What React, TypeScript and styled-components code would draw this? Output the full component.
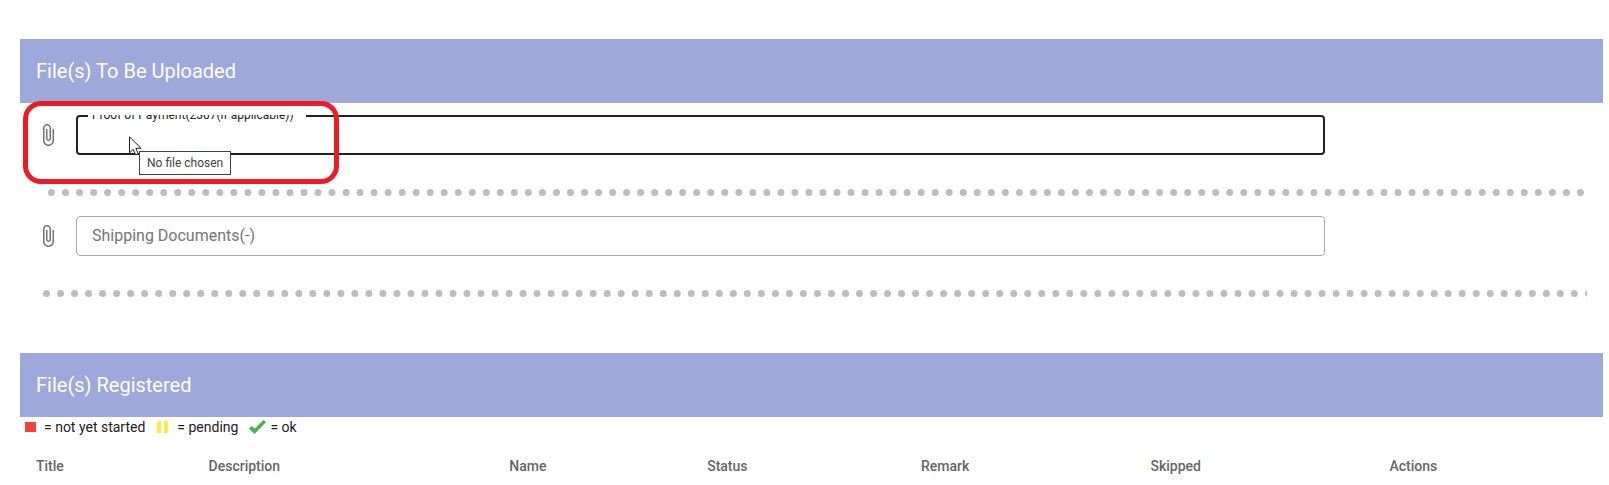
import React from "react";
import styled, { createGlobalStyle } from "styled-components";

const GlobalStyle = createGlobalStyle`
  *, *::before, *::after { box-sizing: border-box; }
  body {
    margin: 0;
    background: #fff;
    color: #212121;
    font-family: Roboto, "Liberation Sans", sans-serif;
    font-size: 14px;
  }
`;

const Page = styled.main`
  padding: 39px 6px 0 20px;
`;

const SectionBar = styled.h2`
  display: flex;
  align-items: center;
  height: 64px;
  margin: 0;
  padding: 0 16px;
  background: #9fa8da;
  color: #fff;
  font-size: 20px;
  font-weight: 400;
  line-height: 32px;
`;

const UploadList = styled.section`
  padding-bottom: 56px;
`;

const UploadRow = styled.div<{ $first?: boolean }>`
  position: relative;
  padding: ${(p) => (p.$first ? 12 : 20)}px 16px 34px;
`;

const UploadField = styled.div`
  display: flex;
  align-items: center;
  gap: 16px;
  width: 83.1%;
`;

const ClipIcon = styled.svg`
  flex: none;
  width: 24px;
  height: 24px;
  fill: #757575;
`;

const FieldBox = styled.div`
  position: relative;
  flex: 1;
  min-width: 0;
  height: 40px;
  overflow: hidden;
`;

const FileInput = styled.input<{ $active?: boolean }>`
  display: block;
  width: 100%;
  height: 100%;
  margin: 0;
  border: ${(p) => (p.$active ? "2px solid #212121" : "1px solid #a9a9a9")};
  border-radius: 4px;
  background: #fff;
  font-size: 0;
  outline: none;

  &::file-selector-button {
    display: none;
  }
`;

const FieldLabel = styled.label<{ $active?: boolean }>`
  position: absolute;
  left: 12px;
  top: ${(p) => (p.$active ? "-8px" : "8px")};
  padding: 0 12px 0 4px;
  background: #fff;
  color: ${(p) => (p.$active ? "#212121" : "#757575")};
  font-size: ${(p) => (p.$active ? 12 : 16)}px;
  line-height: ${(p) => (p.$active ? 16 : 24)}px;
  white-space: nowrap;
`;

const DividerTrack = styled.div<{ $bleed?: boolean }>`
  overflow: hidden;
  margin: ${(p) => (p.$bleed ? "0 16px 0 23px" : "0 18px 0 28px")};
`;

const Dots = styled.hr<{ $bleed?: boolean }>`
  height: 0;
  margin: 0 ${(p) => (p.$bleed ? "-6px" : "0")} 0 0;
  border: 0;
  border-top: 7px dotted #bdbdbd;
`;

const Highlight = styled.div`
  position: absolute;
  left: 3px;
  top: -2px;
  width: 316px;
  height: 83px;
  border: 5px solid #ed1c24;
  border-radius: 18px;
  pointer-events: none;
`;

const Pointer = styled.svg`
  position: absolute;
  left: 109px;
  top: 33px;
  width: 13px;
  height: 20px;
`;

const Tooltip = styled.div`
  position: absolute;
  left: 119px;
  top: 48px;
  padding: 0 7px;
  border: 1px solid #424242;
  background: #fff;
  color: #424242;
  font-size: 12px;
  line-height: 22px;
  white-space: nowrap;
`;

const Legend = styled.ul`
  display: flex;
  align-items: center;
  gap: 11px;
  height: 20px;
  margin: 0;
  padding: 0 4px;
  list-style: none;
  line-height: 20px;
`;

const LegendItem = styled.li<{ $gap: number }>`
  display: flex;
  align-items: center;
  gap: ${(p) => p.$gap}px;
`;

const StatusIcon = styled.svg`
  flex: none;
`;

const FileTable = styled.table`
  width: 100%;
  border-collapse: collapse;
  table-layout: fixed;
`;

const HeadCell = styled.th<{ $width: string }>`
  width: ${(p) => p.$width};
  padding: 19px 16px 8px;
  color: #666;
  font-size: 14px;
  font-weight: 500;
  line-height: 20px;
  text-align: left;
`;

const columns = [
  { title: "Title", width: "10.9%" },
  { title: "Description", width: "19%" },
  { title: "Name", width: "12.5%" },
  { title: "Status", width: "13.5%" },
  { title: "Remark", width: "14.5%" },
  { title: "Skipped", width: "15.1%" },
  { title: "Actions", width: "14.5%" },
];

const Paperclip = () => (
  <ClipIcon viewBox="0 0 24 24" aria-hidden="true">
    <path d="M16.5 6v11.5c0 2.21-1.79 4-4 4s-4-1.79-4-4V5c0-1.38 1.12-2.5 2.5-2.5s2.5 1.12 2.5 2.5v10.5c0 .55-.45 1-1 1s-1-.45-1-1V6H10v9.5c0 1.38 1.12 2.5 2.5 2.5s2.5-1.12 2.5-2.5V5c0-2.21-1.79-4-4-4S7 2.79 7 5v12.5c0 3.04 2.46 5.5 5.5 5.5s5.5-2.46 5.5-5.5V6h-1.5z" />
  </ClipIcon>
);

type FileFieldProps = { id: string; label: string; active?: boolean };

const FileField = ({ id, label, active }: FileFieldProps) => (
  <UploadField>
    <Paperclip />
    <FieldBox>
      <FileInput id={id} type="file" $active={active} />
      <FieldLabel htmlFor={id} $active={active}>
        {label}
      </FieldLabel>
    </FieldBox>
  </UploadField>
);

export default function App() {
  return (
    <>
      <GlobalStyle />
      <Page>
        <SectionBar>File(s) To Be Uploaded</SectionBar>
        <UploadList>
          <UploadRow $first>
            <FileField id="proof" label="Proof of Payment(2307(if applicable))" active />
            <Highlight />
            <Pointer viewBox="0 0 13 20" aria-hidden="true">
              <path
                d="M.5 .8V16.8L4.2 13.3L6.6 18.8L9.2 17.7L6.9 12.3H12Z"
                fill="#fff"
                stroke="#1c1c28"
              />
            </Pointer>
            <Tooltip role="tooltip">No file chosen</Tooltip>
          </UploadRow>
          <DividerTrack>
            <Dots />
          </DividerTrack>
          <UploadRow>
            <FileField id="shipping" label="Shipping Documents(-)" />
          </UploadRow>
          <DividerTrack $bleed>
            <Dots $bleed />
          </DividerTrack>
        </UploadList>

        <SectionBar>File(s) Registered</SectionBar>
        <Legend>
          <LegendItem $gap={8}>
            <StatusIcon width="12" height="12" viewBox="0 0 12 12" aria-hidden="true">
              <path d="M1 1h11v10H1z" fill="#f44336" />
            </StatusIcon>
            = not yet started
          </LegendItem>
          <LegendItem $gap={8}>
            <StatusIcon width="13" height="12" viewBox="0 0 13 12" aria-hidden="true">
              <path d="M1 0h4v12H1zM8 0h4v12H8z" fill="#ffeb3b" />
            </StatusIcon>
            = pending
          </LegendItem>
          <LegendItem $gap={4}>
            <StatusIcon width="17" height="14" viewBox="0 0 17 14" aria-hidden="true">
              <path d="M0 8.500L2.500 6L6 8.500L14.500 0L17 2L5.500 14z" fill="#4caf50" />
            </StatusIcon>
            = ok
          </LegendItem>
        </Legend>
        <FileTable>
          <thead>
            <tr>
              {columns.map((c) => (
                <HeadCell key={c.title} scope="col" $width={c.width}>
                  {c.title}
                </HeadCell>
              ))}
            </tr>
          </thead>
        </FileTable>
      </Page>
    </>
  );
}
